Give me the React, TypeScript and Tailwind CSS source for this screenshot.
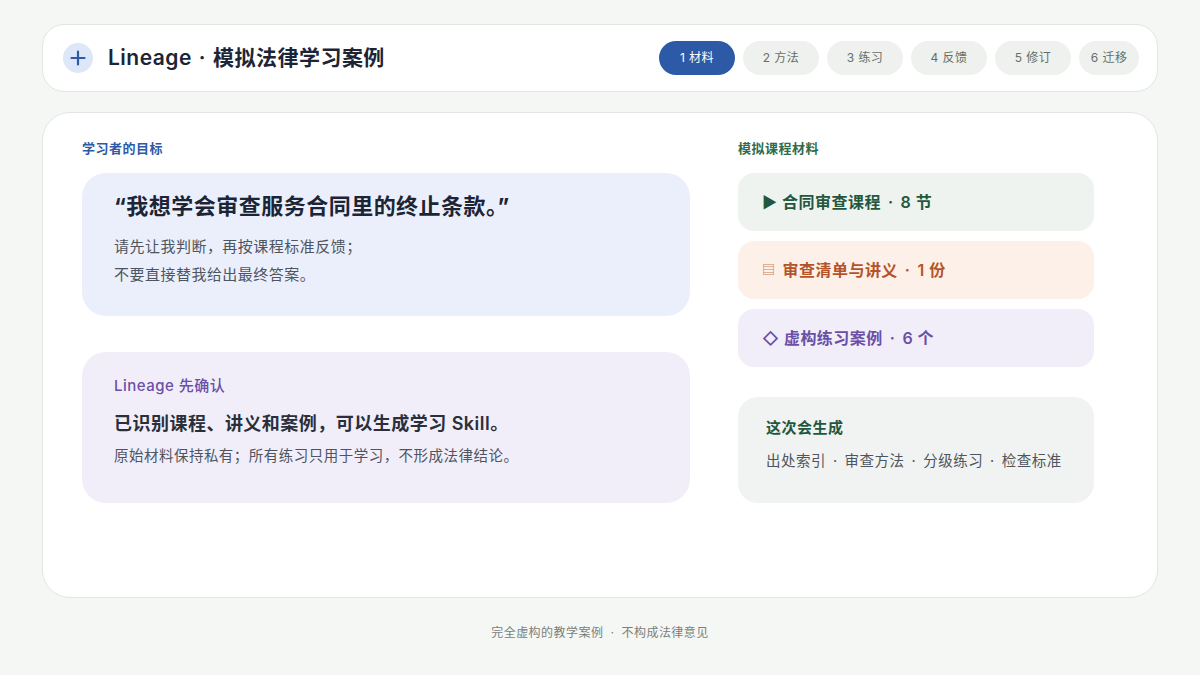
const font = { fontFamily: '"Inter", "Noto Sans CJK SC", sans-serif' };

const steps = ['1 材料', '2 方法', '3 练习', '4 反馈', '5 修订', '6 迁移'];
const Dot = () => <span className="mx-[7px]">·</span>;

export default function App() {
  return (
    <div style={font} className="w-[1200px] h-[675px] bg-[#f5f7f4] px-[42px] pt-[24px] text-[#1c2536] tracking-[0.03em]">
      <header className="h-[68px] bg-white border border-[#e1e6e2] rounded-[22px] flex items-center pl-[20px] pr-[18px]">
        <div className="w-[30px] h-[30px] rounded-full bg-[#dde7f8] flex items-center justify-center">
          <svg width="16" height="16" viewBox="0 0 16 16"><path d="M8 1.5v13M1.5 8h13" stroke="#2d5aa6" strokeWidth="2.2" strokeLinecap="round" /></svg>
        </div>
        <div className="ml-[15px] text-[21px] font-semibold text-[#1c2536]">Lineage<Dot />模拟法律学习案例</div>
        <div className="ml-auto flex gap-[8px]">
          {steps.map((s, i) => (
            <div key={s} className={`h-[34px] rounded-full flex items-center justify-center text-[12px] ${i === 5 ? 'w-[60px]' : 'w-[76px]'} ${i === 0 ? 'bg-[#2d5aa6] text-white' : 'bg-[#eef1ee] text-[#667068]'}`}>{s}</div>
          ))}
        </div>
      </header>

      <main className="mt-[20px] h-[486px] bg-white border border-[#e1e6e2] rounded-[28px] pl-[39px] pt-[27px] flex gap-[48px]">
        <div className="w-[608px]">
          <div className="text-[13px] font-semibold text-[#2d5aa6] h-[16px] leading-[16px]">学习者的目标</div>
          <div className="mt-[17px] h-[143px] bg-[#ebeffb] rounded-[24px] pl-[32px] pt-[17px]">
            <div className="text-[22px] font-bold text-[#1c2536]">“我想学会审查服务合同里的终止条款。”</div>
            <div className="mt-[10px] text-[15px] leading-[28px] text-[#4e5560]">请先让我判断，再按课程标准反馈；<br />不要直接替我给出最终答案。</div>
          </div>
          <div className="mt-[36px] h-[151px] bg-[#f1eefa] rounded-[24px] pl-[32px] pt-[23px]">
            <div className="text-[15px] font-medium text-[#6a4fa6]">Lineage 先确认</div>
            <div className="mt-[12px] text-[18px] font-semibold text-[#2a2f3a]">已识别课程、讲义和案例，可以生成学习 Skill。</div>
            <div className="mt-[8px] text-[14.5px] text-[#4e5560]">原始材料保持私有；所有练习只用于学习，不形成法律结论。</div>
          </div>
        </div>
        <div className="w-[356px]">
          <div className="text-[13px] font-semibold text-[#2f6b4a] h-[16px] leading-[16px]">模拟课程材料</div>
          <div className="mt-[17px] flex flex-col gap-[10px]">
            <div className="h-[58px] bg-[#eef3ef] rounded-[16px] flex items-center pl-[24px] text-[16px] font-semibold text-[#23573d]">▶ 合同审查课程<Dot />8 节</div>
            <div className="h-[58px] bg-[#fdf0e8] rounded-[16px] flex items-center pl-[24px] text-[16px] font-semibold text-[#b4532a]">
              <span className="text-[13px] mr-[7px] text-[#c98060]">▤</span>审查清单与讲义<Dot />1 份</div>
            <div className="h-[58px] bg-[#f1eefa] rounded-[16px] flex items-center pl-[24px] text-[16px] font-semibold text-[#6a4fa6]">◇ 虚构练习案例<Dot />6 个</div>
          </div>
          <div className="mt-[30px] h-[106px] bg-[#f0f3f1] rounded-[20px] pl-[28px] pt-[20px]">
            <div className="text-[15px] font-semibold text-[#23573d]">这次会生成</div>
            <div className="mt-[10px] text-[14.5px] text-[#4e5560]">出处索引<Dot />审查方法<Dot />分级练习<Dot />检查标准</div>
          </div>
        </div>
      </main>
      <div className="mt-[26px] text-center text-[12px] text-[#7a8079]">完全虚构的教学案例<Dot />不构成法律意见</div>
    </div>
  );
}
